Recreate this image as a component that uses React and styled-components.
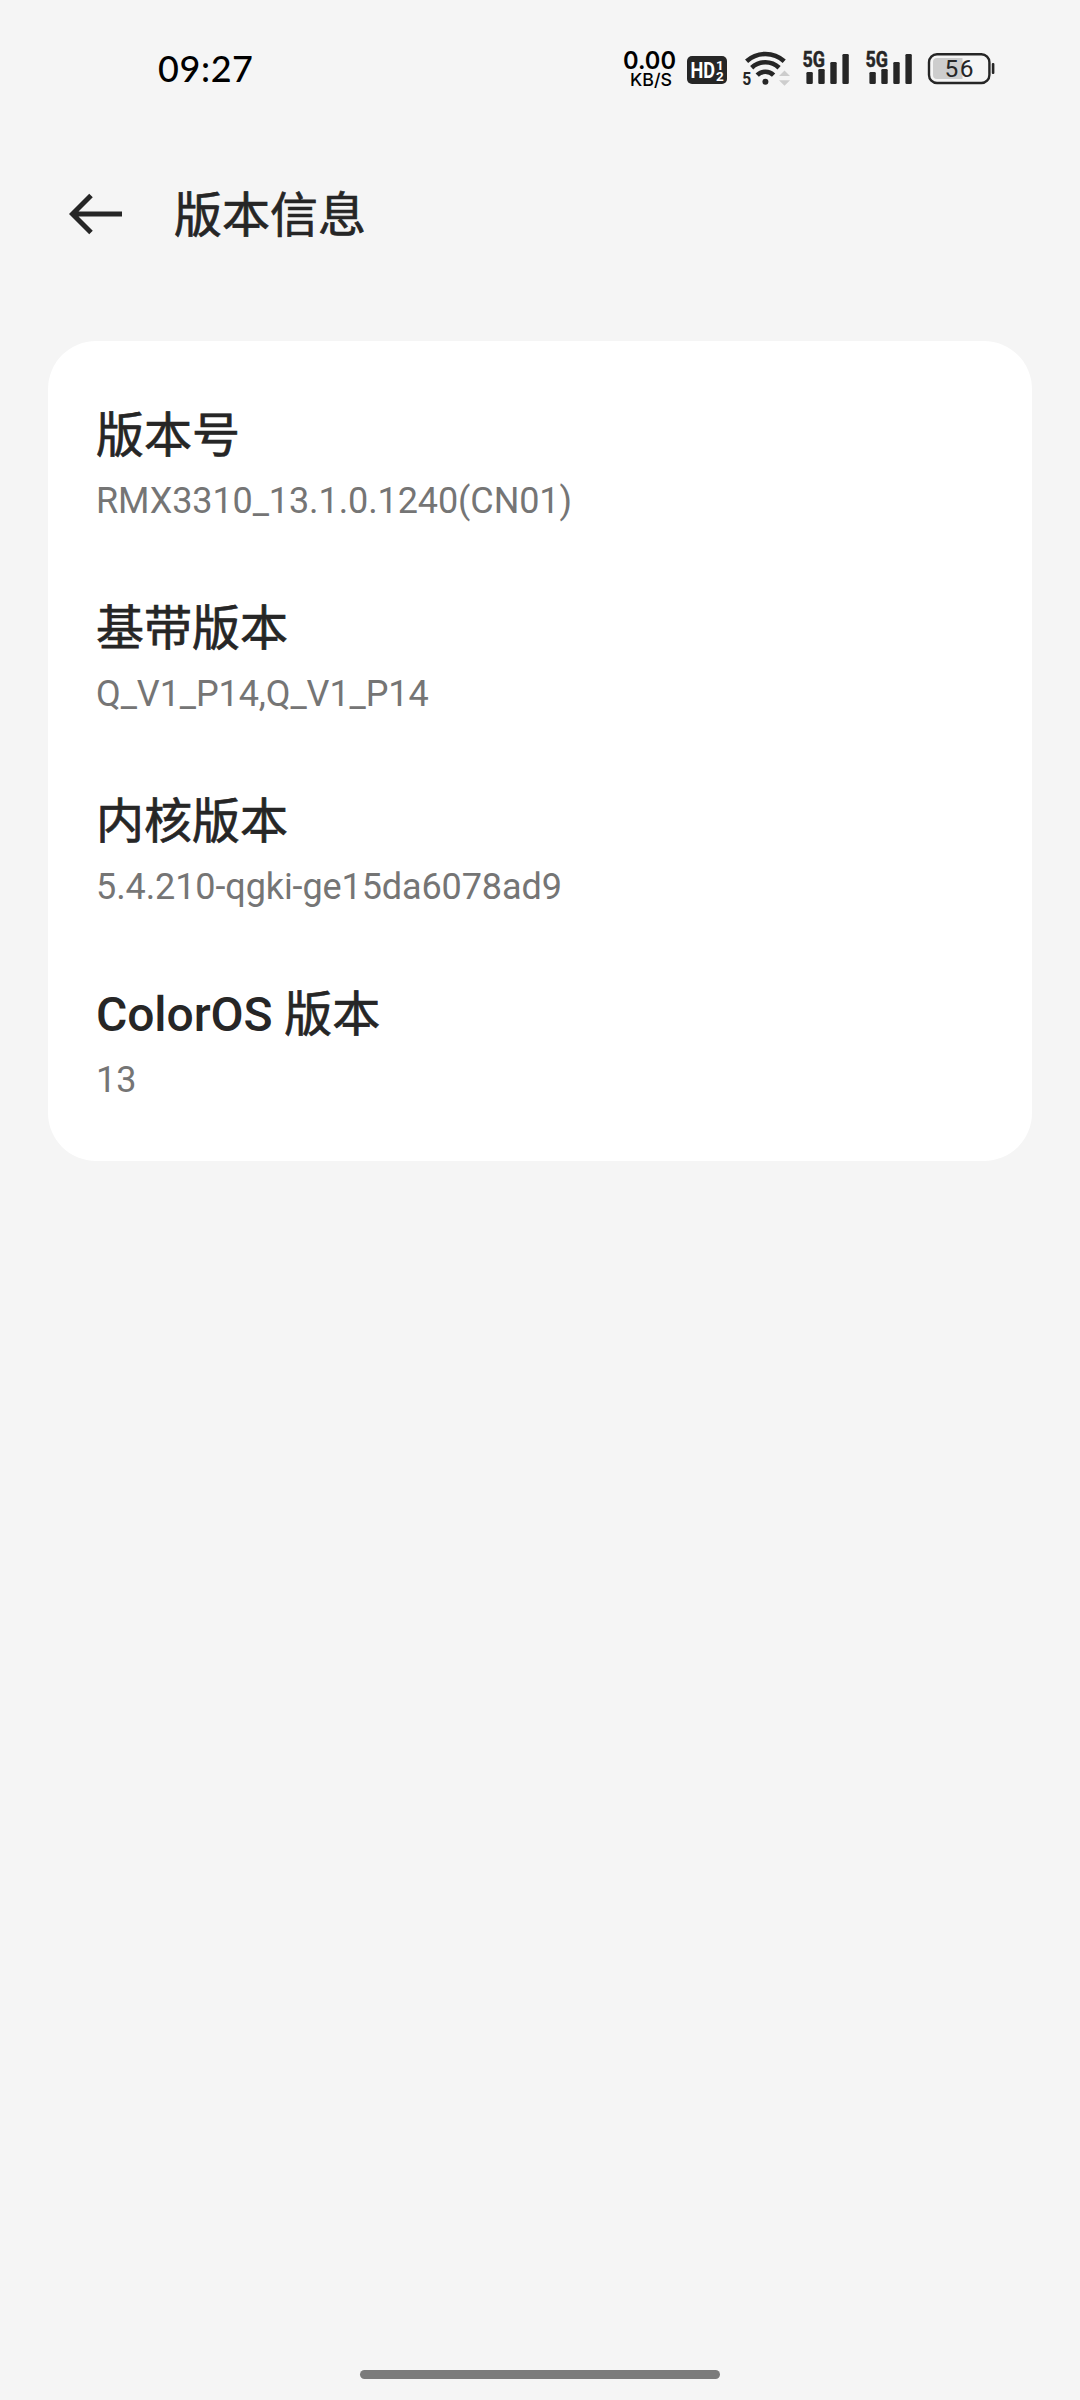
import React from 'react';
import styled, { createGlobalStyle } from 'styled-components';

const colors = {
  background: '#f5f5f5',
  card: '#ffffff',
  ink: '#262626',
  sub: '#757575',
  faint: '#cdcdcd',
};

const GlobalStyle = createGlobalStyle`
  body {
    margin: 0;
    background-color: ${colors.background};
  }
`;

const Screen = styled.div`
  display: flex;
  flex-direction: column;
  width: 1080px;
  height: 2400px;
  background-color: ${colors.background};
  color: ${colors.ink};
  font-family: Roboto, 'Noto Sans CJK SC', sans-serif;
`;

const StatusBar = styled.div`
  display: flex;
  justify-content: space-between;
  height: 100px;
  padding: 40px 80px 0 158px;
  box-sizing: border-box;
`;

const Clock = styled.div`
  color: #000;
  font-family: Lato, sans-serif;
  font-size: 36px;
  font-weight: 500;
  line-height: 57px;
  letter-spacing: 0.6px;
`;

const StatusIcons = styled.div`
  display: flex;
`;

const StatusIcon = styled.svg`
  display: block;
  flex: none;
  overflow: visible;
`;

const Header = styled.header`
  display: flex;
  align-items: center;
  height: 228px;
  padding: 0 0 0 69px;
  margin: 0 0 13px;
  box-sizing: border-box;
`;

const BackButton = styled.button`
  display: flex;
  padding: 0;
  margin-right: 49px;
  border: 0;
  background: none;
  color: ${colors.ink};
`;

const Title = styled.h1`
  margin: 0;
  padding-top: 4px;
  font-size: 48px;
  font-weight: 400;
  line-height: 56px;
  -webkit-text-stroke: 0.7px;
`;

const Card = styled.ul`
  margin: 0 48px;
  padding: 24px 48px;
  border-radius: 48px;
  background-color: ${colors.card};
  list-style: none;
`;

const Item = styled.li`
  display: flex;
  flex-direction: column;
  height: 193px;
  padding-top: 43px;
  box-sizing: border-box;

  .name {
    font-size: 48px;
    font-weight: 400;
    line-height: 56px;
    -webkit-text-stroke: 0.7px;
  }
  .latin {
    font-weight: 500;
    letter-spacing: -0.1px;
    -webkit-text-stroke: 0;
  }
  .value {
    margin-top: 16px;
    color: ${colors.sub};
    font-size: 36px;
    line-height: 42px;
    letter-spacing: -0.1px;
  }
`;

const Footer = styled.footer`
  display: flex;
  justify-content: center;
  margin-top: auto;
  padding-bottom: 21px;
`;

const HomeBar = styled.div`
  width: 360px;
  height: 9px;
  border-radius: 5px;
  background-color: #7b7b7b;
`;

const items = [
  { name: '版本号', value: 'RMX3310_13.1.0.1240(CN01)' },
  { name: '基带版本', value: 'Q_V1_P14,Q_V1_P14' },
  { name: '内核版本', value: '5.4.210-qgki-ge15da6078ad9' },
  { latin: 'ColorOS ', name: '版本', value: '13' },
];

const NetSpeed = () => (
  <StatusIcon width="64" height="60" fontFamily="Inter, sans-serif">
    <text x="3" y="29.2" fontSize="24" fontWeight="600" textLength="53" lengthAdjust="spacingAndGlyphs">
      0.00
    </text>
    <text x="10" y="46" fontSize="17.5" fontWeight="500" textLength="42" lengthAdjust="spacingAndGlyphs">
      KB/S
    </text>
  </StatusIcon>
);

const HdBadge = () => (
  <StatusIcon width="54" height="60" fontFamily="Roboto, sans-serif" fontWeight="700">
    <rect x="3" y="16" width="40" height="28" rx="5" fill={colors.ink} />
    <g fill="#fff">
      <text x="6.5" y="38" fontSize="22.5" textLength="24.5" lengthAdjust="spacingAndGlyphs">
        HD
      </text>
      <text x="32" y="29.5" fontSize="13.5">
        1
      </text>
      <text x="32" y="41" fontSize="13.5">
        2
      </text>
    </g>
  </StatusIcon>
);

const Wifi = () => (
  <StatusIcon width="64" height="60">
    <g fill="none" stroke={colors.ink} strokeWidth="4.6">
      <path d="M8.6 21.2a28 28 0 0 1 37.6 0" />
      <path d="M13.7 27.7a20 20 0 0 1 27.4 0" />
      <path d="M19.2 35.2a11.5 11.5 0 0 1 16.4 0" />
    </g>
    <circle cx="27.4" cy="41.7" r="3" fill={colors.ink} />
    <path d="M41 36l5.5-5.5L52 36zM41 40.2h11l-5.5 5.5z" fill={colors.faint} />
    <text
      x="4.2"
      y="45.3"
      fontFamily="Roboto, sans-serif"
      fontSize="18"
      fontWeight="700"
      textLength="9"
      lengthAdjust="spacingAndGlyphs"
      fill={colors.ink}
    >
      5
    </text>
  </StatusIcon>
);

const Signal = () => (
  <StatusIcon width="62.7" height="60" fill={colors.ink}>
    <rect x="4.4" y="32" width="6.4" height="12" rx="1.3" />
    <rect x="16.3" y="29" width="6.4" height="15" rx="1.3" />
    <rect x="28.3" y="22" width="6.4" height="22" rx="1.3" />
    <rect x="40.4" y="14" width="6.4" height="30" rx="1.3" />
    <text
      x="0.4"
      y="27.2"
      fontFamily="Roboto, sans-serif"
      fontSize="21.5"
      fontWeight="700"
      textLength="22.4"
      lengthAdjust="spacingAndGlyphs"
      stroke={colors.ink}
      strokeWidth="0.5"
    >
      5G
    </text>
  </StatusIcon>
);

const Battery = () => (
  <StatusIcon width="72.6" height="60">
    <path d="M10 18h25.5v21H10a4 4 0 0 1-4-4V22a4 4 0 0 1 4-4z" fill={colors.faint} />
    <rect x="2" y="14.2" width="60.4" height="28.8" rx="8" fill="none" stroke={colors.ink} strokeWidth="2.4" />
    <rect x="64.8" y="23" width="2.6" height="11" rx="1" fill={colors.ink} />
    <text x="17.6" y="37.2" fontFamily="Roboto, sans-serif" fontSize="24.5" textLength="29" fill={colors.ink}>
      56
    </text>
  </StatusIcon>
);

const BackArrow = () => (
  <svg width="56" height="48" fill="none" stroke="currentColor" strokeWidth="5">
    <path d="M53 24H4M22 5.5L3.5 24 22 42.5" />
  </svg>
);

const App = () => {
  return (
    <Screen>
      <GlobalStyle />
      <StatusBar>
        <Clock>09:27</Clock>
        <StatusIcons>
          <NetSpeed />
          <HdBadge />
          <Wifi />
          <Signal />
          <Signal />
          <Battery />
        </StatusIcons>
      </StatusBar>
      <Header>
        <BackButton aria-label="返回">
          <BackArrow />
        </BackButton>
        <Title>版本信息</Title>
      </Header>
      <Card>
        {items.map((item) => (
          <Item key={item.value}>
            <span className="name">
              {item.latin && <span className="latin">{item.latin}</span>}
              {item.name}
            </span>
            <span className="value">{item.value}</span>
          </Item>
        ))}
      </Card>
      <Footer>
        <HomeBar />
      </Footer>
    </Screen>
  );
};

export default App;
